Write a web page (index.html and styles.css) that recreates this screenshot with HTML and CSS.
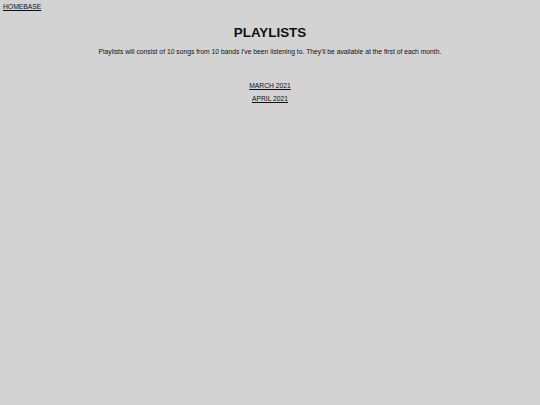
FILE: index.html
```html
<!DOCTYPE html>
<html>
<head>
<meta charset="utf-8">
<link rel="stylesheet" href="styles.css">
</head>
<body>
<nav class="top"><a href="#" class="home">HOMEBASE</a></nav>
<main class="content">
<h1 class="title">PLAYLISTS</h1>
<p class="intro">Playlists will consist of 10 songs from 10 bands I've been listening to. They'll be available at the first of each month.</p>
<ul class="list">
<li><a href="#">MARCH 2021</a></li>
<li><a href="#">APRIL 2021</a></li>
</ul>
</main>
</body>
</html>
```
FILE: styles.css
```css
html, body {
  margin: 0;
  padding: 0;
  background: #d3d3d3;
  color: #111;
  font-family: "Liberation Sans", Arial, sans-serif;
  min-height: 100%;
}
.top {
  padding: 2px 3px 0;
  font-size: 6.75px;
  line-height: 9px;
}
a {
  color: #111;
  text-decoration: underline;
}
.content {
  text-align: center;
}
.title {
  margin: 14px 0 0;
  font-size: 13.4px;
  line-height: 16px;
  font-weight: bold;
}
.intro {
  margin: 6px 0 0;
  font-size: 6.75px;
  line-height: 9px;
}
.list {
  list-style: none;
  margin: 23px 0 0;
  padding: 0;
  font-size: 6.75px;
  line-height: 13px;
}
```
